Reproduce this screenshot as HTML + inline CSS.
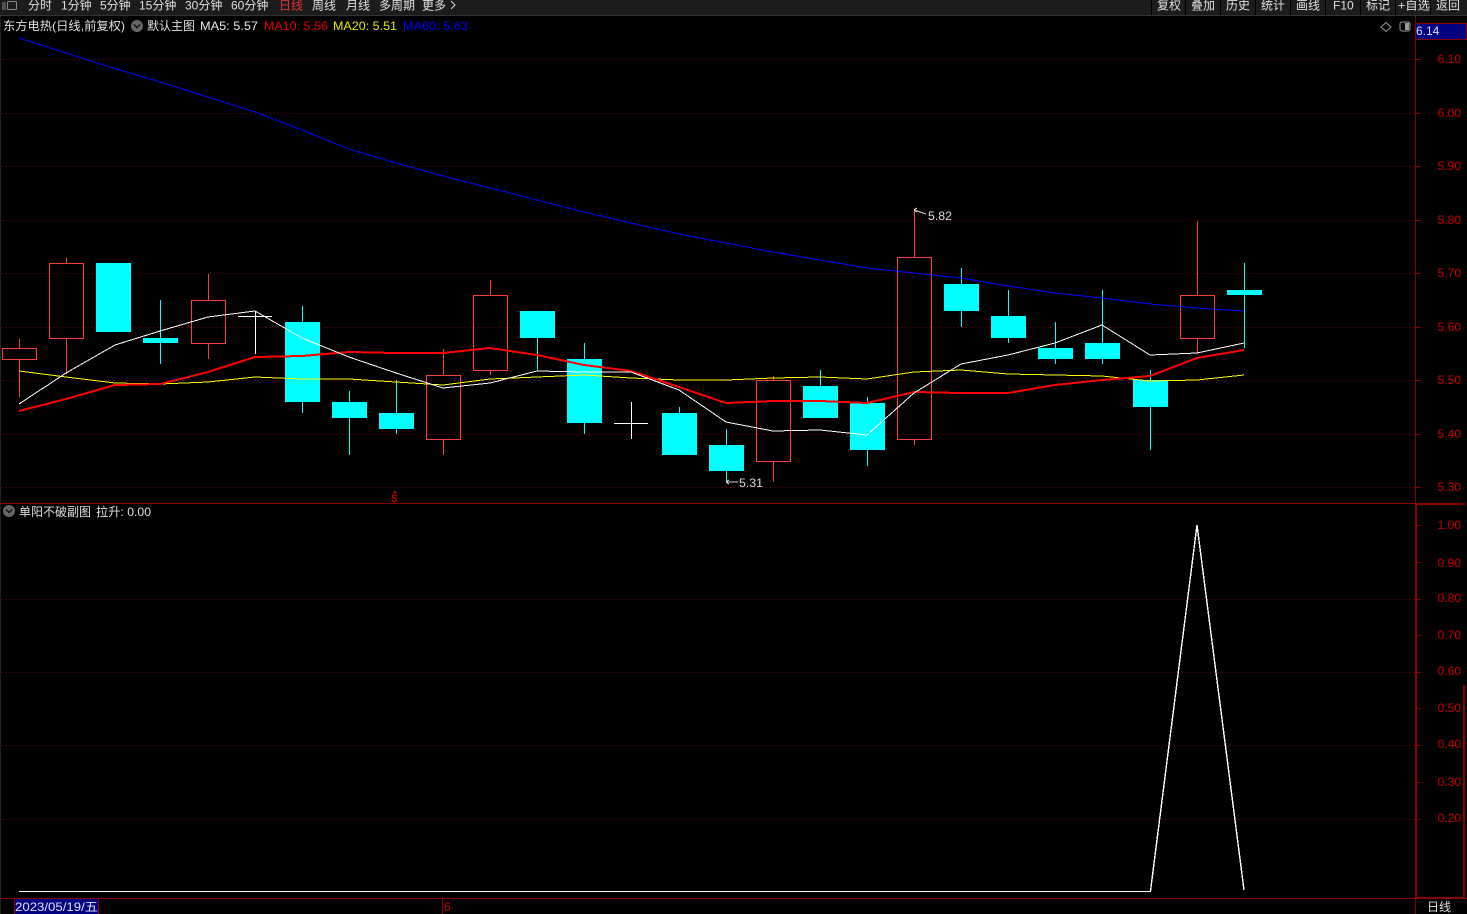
<!DOCTYPE html>
<html><head><meta charset="utf-8"><style>
html,body{margin:0;padding:0;background:#000;width:1467px;height:914px;overflow:hidden}
svg{display:block;position:absolute;left:0;top:0}
text{font-family:"Liberation Sans","Noto Sans CJK SC",sans-serif;font-size:12px}
.n{fill:#e0e0e0}.a{fill:#c80000}
</style></head><body>
<svg width="1467" height="914" viewBox="0 0 1467 914" xmlns="http://www.w3.org/2000/svg">
<rect x="0" y="0" width="1467" height="914" fill="#000"/>
<rect x="0" y="0" width="1467" height="15" fill="#1c1c1c"/>
<rect x="0" y="15" width="1467" height="1" fill="#333"/>
<rect x="0" y="16" width="1" height="898" fill="#222"/>
<g fill="#000">
<rect x="1151" y="0" width="1" height="15"/><rect x="1185" y="0" width="1" height="15"/><rect x="1220" y="0" width="1" height="15"/><rect x="1255" y="0" width="1" height="15"/><rect x="1290" y="0" width="1" height="15"/><rect x="1325" y="0" width="1" height="15"/><rect x="1360" y="0" width="1" height="15"/><rect x="1395" y="0" width="1" height="15"/><rect x="1430" y="0" width="1" height="15"/>
</g>
<g fill="none" stroke="#888"><rect x="7.5" y="1.5" width="9" height="8" rx="1"/><path d="M3 2v8M5 2v8"/></g>
<g class="n">
<text x="28" y="9.5">分时</text><text x="61" y="9.5">1分钟</text><text x="100" y="9.5">5分钟</text><text x="139" y="9.5">15分钟</text><text x="185" y="9.5">30分钟</text><text x="231" y="9.5">60分钟</text>
<text x="279" y="9.5" style="fill:#e83030">日线</text><text x="312" y="9.5">周线</text><text x="346" y="9.5">月线</text><text x="379" y="9.5">多周期</text><text x="422" y="9.5">更多</text>
<text x="1157" y="9.5">复权</text><text x="1191" y="9.5">叠加</text><text x="1226" y="9.5">历史</text><text x="1261" y="9.5">统计</text><text x="1296" y="9.5">画线</text><text x="1333" y="9.5">F10</text><text x="1366" y="9.5">标记</text><text x="1398" y="9.5" textLength="32" lengthAdjust="spacingAndGlyphs">+自选</text><text x="1436" y="9.5">返回</text>
</g>
<path d="M451 1l4 4-4 4" fill="none" stroke="#d8d8d8"/>

<g stroke="#8b0000" stroke-dasharray="1 3" shape-rendering="crispEdges">
<path d="M2 59.5H1415M2 113.5H1415M2 166.5H1415M2 220.5H1415M2 273.5H1415M2 327.5H1415M2 380.5H1415M2 434.5H1415M2 487.5H1415"/>
<path d="M2 599.5H1415M2 672.5H1415M2 745.5H1415M2 819.5H1415"/>
</g>

<g shape-rendering="crispEdges">
<g fill="#0ff">
<rect x="96" y="263" width="35" height="69"/>
<rect x="143" y="338" width="35" height="5"/><rect x="160" y="300" width="1" height="64"/>
<rect x="285" y="322" width="35" height="80"/><rect x="302" y="306" width="1" height="107"/>
<rect x="332" y="402" width="35" height="16"/><rect x="349" y="391" width="1" height="64"/>
<rect x="379" y="413" width="35" height="16"/><rect x="396" y="380" width="1" height="54"/>
<rect x="520" y="311" width="35" height="27"/><rect x="537" y="338" width="1" height="32"/>
<rect x="567" y="359" width="35" height="64"/><rect x="584" y="343" width="1" height="91"/>
<rect x="662" y="413" width="35" height="42"/><rect x="679" y="407" width="1" height="6"/>
<rect x="709" y="445" width="35" height="26"/><rect x="726" y="429" width="1" height="54"/>
<rect x="803" y="386" width="35" height="32"/><rect x="820" y="370" width="1" height="16"/>
<rect x="850" y="403" width="35" height="47"/><rect x="867" y="397" width="1" height="69"/>
<rect x="944" y="284" width="35" height="27"/><rect x="961" y="268" width="1" height="59"/>
<rect x="991" y="316" width="35" height="22"/><rect x="1008" y="290" width="1" height="53"/>
<rect x="1038" y="348" width="35" height="11"/><rect x="1055" y="322" width="1" height="42"/>
<rect x="1085" y="343" width="35" height="16"/><rect x="1102" y="290" width="1" height="74"/>
<rect x="1133" y="380" width="35" height="27"/><rect x="1150" y="370" width="1" height="80"/>
<rect x="1227" y="290" width="35" height="5"/><rect x="1244" y="263" width="1" height="85"/>
</g>
<g stroke="#ff3c3c" fill="none">
<path d="M19.5 339V348M19.5 359V397"/><rect x="2.5" y="348.5" width="34" height="11"/>
<path d="M66.5 258V263M66.5 339V374"/><rect x="49.5" y="263.5" width="34" height="75"/>
<path d="M208.5 274V300M208.5 344V359"/><rect x="191.5" y="300.5" width="34" height="43"/>
<path d="M443.5 349V375M443.5 440V455"/><rect x="426.5" y="375.5" width="34" height="64"/>
<path d="M490.5 280V295M490.5 371V375"/><rect x="473.5" y="295.5" width="34" height="75"/>
<path d="M773.5 376V380M773.5 462V482"/><rect x="756.5" y="380.5" width="34" height="81"/>
<path d="M914.5 209V257M914.5 440V445"/><rect x="897.5" y="257.5" width="34" height="182"/>
<path d="M1197.5 221V295M1197.5 339V354"/><rect x="1180.5" y="295.5" width="34" height="43"/>
</g>
<path d="M238 316.5H272M255.5 311V354M614 423.5H648M631.5 402V439" stroke="#fff" fill="none"/>

<polyline fill="none" stroke="#0000ff" stroke-width="1" points="19,38 66,53 113,68 160,82 208,97 255,112 302,130 349,149 396,163 443,176 490,188 537,200 584,212 631,223 679,234 726,243 773,252 820,260 867,268 914,273 961,278 1008,286 1055,293 1102,298 1150,304 1197,308 1244,311"/>
<polyline fill="none" stroke="#ffff00" stroke-width="1" points="19,371 66,377 115,383 160,384 208,382 255,377 302,379 349,379 396,382 443,385 490,379 537,377 584,375 631,378 679,380 726,380 773,378 820,377 867,379 914,372 961,370 1008,374 1055,375 1102,376 1150,381 1197,380 1244,375"/>
<polyline fill="none" stroke="#ff0000" stroke-width="2" points="19,411 66,399 115,385 160,384 208,372 255,357 302,356 349,352 396,353 443,353 490,348 537,355 584,365 631,371 679,387 726,403 773,401 820,401 867,403 914,392 961,393 1008,393 1055,385 1102,380 1150,376 1197,358 1244,350"/>
<polyline fill="none" stroke="#ffffff" stroke-width="1" points="19,404 66,373 115,345 160,331 208,317 255,311 302,338 349,357 396,373 443,388 490,383 537,371 584,372 631,372 679,390 726,422 773,431 820,430 867,435 914,393 961,364 1008,355 1055,343 1102,325 1150,355 1197,353 1244,343"/>
<rect x="19" y="891" width="1132" height="1" fill="#fff"/>
<polyline fill="none" stroke="#ffffff" stroke-width="1.4" points="1150.5,891 1197,525 1244,890"/>
<path d="M914 210L926 214M914 210l3 -2M914 210l3 2M726 482H738M726 482l3 -2M726 482l3 2" stroke="#ccc" fill="none"/>

<g fill="#8b0000">
<rect x="1415" y="16" width="1" height="488"/>
<rect x="0" y="503" width="1415" height="1"/>
<rect x="1415" y="503" width="50" height="2"/>
<rect x="1415" y="505" width="2" height="393"/>
<rect x="1463" y="685" width="2" height="213"/>
<rect x="0" y="898" width="1467" height="1"/>
<rect x="1415" y="897" width="50" height="2"/>
<rect x="1415" y="899" width="1" height="15"/>
</g>
<g stroke="#8b0000" fill="none">
<path d="M1415 59.5h6M1415 113.5h6M1415 166.5h6M1415 220.5h6M1415 273.5h6M1415 327.5h6M1415 380.5h6M1415 434.5h6M1415 487.5h6"/>
<path d="M1417 525.5h4M1417 562.5h4M1417 599.5h4M1417 635.5h4M1417 672.5h4M1417 708.5h4M1417 745.5h4M1417 782.5h4M1417 819.5h4"/>
</g>
<rect x="1415.5" y="23.5" width="51" height="16" fill="#000080" stroke="#8b0000"/>
<rect x="15" y="899" width="84" height="15" fill="#000080"/>
<path d="M14.5 899V914M98.5 899V914M442.5 899V914" stroke="#8b0000" fill="none"/>
</g>

<text x="1416" y="35" style="fill:#d8e0ff">6.14</text>
<g class="a" text-anchor="end">
<text x="1461" y="63">6.10</text><text x="1461" y="117">6.00</text><text x="1461" y="170">5.90</text><text x="1461" y="224">5.80</text><text x="1461" y="277">5.70</text><text x="1461" y="331">5.60</text><text x="1461" y="384">5.50</text><text x="1461" y="438">5.40</text><text x="1461" y="491">5.30</text>
<text x="1461" y="529">1.00</text><text x="1461" y="567">0.90</text><text x="1461" y="602">0.80</text><text x="1461" y="639">0.70</text><text x="1461" y="675">0.60</text><text x="1461" y="712">0.50</text><text x="1461" y="748">0.40</text><text x="1461" y="786">0.30</text><text x="1461" y="822">0.20</text>
</g>

<text x="3" y="30" class="n" textLength="122" lengthAdjust="spacingAndGlyphs">东方电热(日线,前复权)</text>
<circle cx="137" cy="26" r="6" fill="#666"/><path d="M134 24.5l3 3 3-3" fill="none" stroke="#111" stroke-width="1.5"/>
<text x="147" y="30" class="n">默认主图</text>
<text x="200" y="30" style="fill:#e8e8e8" textLength="58" lengthAdjust="spacingAndGlyphs">MA5: 5.57</text>
<text x="264" y="30" style="fill:#e00000" textLength="64" lengthAdjust="spacingAndGlyphs">MA10: 5.56</text>
<text x="333" y="30" style="fill:#e8e800" textLength="64" lengthAdjust="spacingAndGlyphs">MA20: 5.51</text>
<text x="403" y="30" style="fill:#0000ff" textLength="65" lengthAdjust="spacingAndGlyphs">MA60: 5.63</text>
<path d="M1386 22.5l5 4.5-5 4.5-5-4.5z" fill="none" stroke="#999"/>
<rect x="1400" y="22" width="10" height="9" rx="2" fill="none" stroke="#999"/><rect x="1405" y="23" width="4" height="7" fill="#999"/>

<circle cx="9" cy="511" r="6" fill="#666"/><path d="M6 509.5l3 3 3-3" fill="none" stroke="#111" stroke-width="1.5"/>
<text x="19" y="516" class="n">单阳不破副图</text>
<text x="96" y="516" class="n" textLength="55" lengthAdjust="spacingAndGlyphs">拉升: 0.00</text>

<text x="928" y="220" style="fill:#ddd" textLength="24" lengthAdjust="spacingAndGlyphs">5.82</text>
<text x="739" y="487" style="fill:#ddd" textLength="24" lengthAdjust="spacingAndGlyphs">5.31</text>
<text x="391" y="502" style="fill:#f00;font-size:11px;font-family:'Liberation Mono',monospace">S</text>
<path d="M395 491l2 2h-4z" fill="#f00"/>

<text x="15" y="911" style="fill:#e0e4ff" textLength="83" lengthAdjust="spacingAndGlyphs">2023/05/19/五</text>
<text x="444" y="911" style="fill:#c80000">6</text>
<text x="1427" y="911" class="n">日线</text>
</svg>
</body></html>
